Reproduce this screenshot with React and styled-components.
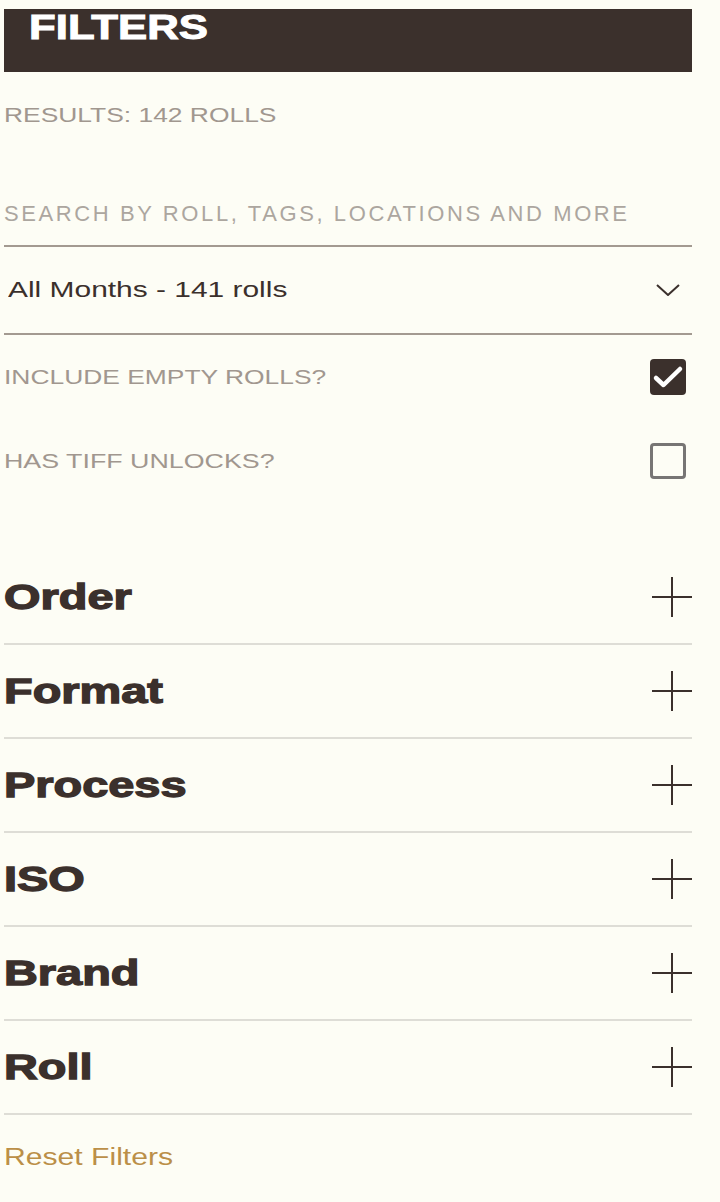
import React, { useState } from "react";
import styled, { createGlobalStyle } from "styled-components";

const GlobalStyle = createGlobalStyle`
  html, body {
    margin: 0;
    padding: 0;
    background: #fdfdf5;
  }
  body {
    font-family: "Liberation Sans", Arial, sans-serif;
    color: #3b302c;
  }
`;

const Page = styled.div`
  width: 688px;
  padding: 9px 28px 40px 4px;
  display: flex;
  flex-direction: column;
`;

// the reference uses an extended grotesk; stretch Liberation Sans to match
const Wide = styled.span`
  display: inline-block;
  white-space: nowrap;
  transform: scaleX(${(p) => p.$sx || 1.32});
  transform-origin: left center;
`;

const Header = styled.div`
  height: 63px;
  background: #3b302c;
  padding: 0 25px;
  box-sizing: border-box;
  h2 {
    margin: 0;
    color: #ffffff;
    font-size: 35px;
    line-height: 35px;
    font-weight: 700;
    -webkit-text-stroke: 1px #ffffff;
  }
`;

const Results = styled.div`
  margin-top: 31px;
  font-size: 20px;
  line-height: 24px;
  color: #a1978f;
`;

const SearchInput = styled.input`
  margin-top: 55px;
  height: 65px;
  width: 100%;
  box-sizing: border-box;
  border: none;
  border-bottom: 2px solid #a39a91;
  background: transparent;
  padding: 0;
  font-family: "Liberation Sans", Arial, sans-serif;
  font-size: 22px;
  letter-spacing: 2.6px;
  color: #3b302c;
  outline: none;
  &::placeholder {
    color: #aca69f;
  }
`;

const Select = styled.div`
  height: 88px;
  box-sizing: border-box;
  border-bottom: 2px solid #a39a91;
  display: flex;
  align-items: center;
  justify-content: space-between;
  padding: 0 12px 0 4px;
  font-size: 22px;
  color: #3b302c;
`;

const CheckRow = styled.label`
  height: 84px;
  display: flex;
  align-items: center;
  justify-content: space-between;
  padding-right: 6px;
  font-size: 20px;
  color: #a1978f;
  cursor: pointer;
`;

const Box = styled.span`
  width: 36px;
  height: 36px;
  box-sizing: border-box;
  border-radius: 4px;
  display: flex;
  align-items: center;
  justify-content: center;
  background: ${(p) => (p.$checked ? "#3b302c" : "transparent")};
  border: ${(p) => (p.$checked ? "none" : "3px solid #777574")};
`;

const Accordion = styled.div`
  margin-top: 48px;
`;

const Section = styled.div`
  height: 94px;
  box-sizing: border-box;
  border-bottom: 2px solid #deddd6;
  display: flex;
  align-items: center;
  justify-content: space-between;
  h3 {
    margin: 0;
    font-size: 35px;
    line-height: 40px;
    font-weight: 700;
    color: #3b302c;
    -webkit-text-stroke: 1.3px #3b302c;
  }
`;

const Reset = styled.button`
  margin-top: 27px;
  align-self: flex-start;
  background: none;
  border: none;
  padding: 0;
  font-family: "Liberation Sans", Arial, sans-serif;
  font-size: 23px;
  line-height: 30px;
  color: #bb8f48;
  cursor: pointer;
  text-align: left;
`;

function Chevron() {
  return (
    <svg width="24" height="12" viewBox="0 0 24 12" fill="none">
      <path d="M1 1l11 10L23 1" stroke="#3b302c" strokeWidth="2" />
    </svg>
  );
}

function Check() {
  return (
    <svg width="36" height="36" viewBox="0 0 36 36" fill="none">
      <path
        d="M6 19l7.5 7L30 10"
        stroke="#ffffff"
        strokeWidth="4.5"
        strokeLinecap="round"
        strokeLinejoin="round"
      />
    </svg>
  );
}

function Plus() {
  return (
    <svg width="40" height="40" viewBox="0 0 40 40" fill="none">
      <path d="M20 0v40M0 20h40" stroke="#3b302c" strokeWidth="2" />
    </svg>
  );
}

const sections = ["Order", "Format", "Process", "ISO", "Brand", "Roll"];

export default function App() {
  const [empty, setEmpty] = useState(true);
  const [tiff, setTiff] = useState(false);

  return (
    <Page>
      <GlobalStyle />
      <Header>
        <h2>
          <Wide $sx={1.25}>FILTERS</Wide>
        </h2>
      </Header>
      <Results>
        <Wide>RESULTS: 142 ROLLS</Wide>
      </Results>
      <SearchInput placeholder="SEARCH BY ROLL, TAGS, LOCATIONS AND MORE" />
      <Select>
        <Wide $sx={1.36}>All Months - 141 rolls</Wide>
        <Chevron />
      </Select>
      <CheckRow onClick={() => setEmpty(!empty)}>
        <Wide>INCLUDE EMPTY ROLLS?</Wide>
        <Box $checked={empty}>{empty && <Check />}</Box>
      </CheckRow>
      <CheckRow onClick={() => setTiff(!tiff)}>
        <Wide $sx={1.34}>HAS TIFF UNLOCKS?</Wide>
        <Box $checked={tiff}>{tiff && <Check />}</Box>
      </CheckRow>
      <Accordion>
        {sections.map((s) => (
          <Section key={s}>
            <h3>
              <Wide $sx={1.34}>{s}</Wide>
            </h3>
            <Plus />
          </Section>
        ))}
      </Accordion>
      <Reset>
        <Wide $sx={1.31}>Reset Filters</Wide>
      </Reset>
    </Page>
  );
}
